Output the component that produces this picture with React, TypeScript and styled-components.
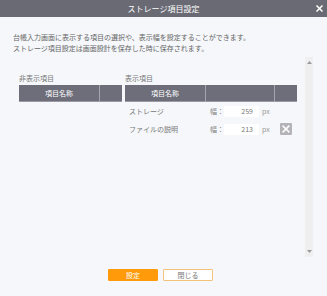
import React from 'react';
import styled, { createGlobalStyle } from 'styled-components';

const Global = createGlobalStyle`
  html, body { margin: 0; padding: 0; }
  body {
    width: 327px; height: 296px; overflow: hidden; background: #f5f7fa;
    font-family: "Noto Sans CJK JP", "Noto Sans", sans-serif;
  }
  * { box-sizing: border-box; }
`;

const Dialog = styled.div`
  width: 327px; height: 296px; display: flex; flex-direction: column; background: #f5f7fa;
`;

const TitleBar = styled.div`
  height: 17px; background: #6a6a74; color: #fff; font-size: 8px;
  display: grid; grid-template-columns: 1fr auto 1fr; align-items: center;
  padding: 0 4px 0 4px;
`;

const Title = styled.div`
  grid-column: 2; line-height: 17px; letter-spacing: 0;
`;

const CloseBtn = styled.button`
  grid-column: 3; justify-self: end; width: 7px; height: 7px; padding: 0; border: 0;
  background: transparent; display: flex; align-items: center; justify-content: center; cursor: pointer;
`;

const Description = styled.div`
  padding: 15px 0 0 13px; font-size: 7px; line-height: 11px; color: #666; height: 37px;
`;

const ScrollArea = styled.div`
  margin-top: 3px; height: 200px; display: flex; padding-left: 19px;
`;

const Panels = styled.div`
  display: flex; gap: 3px; padding-top: 16px;
`;

const Panel = styled.div<{ $w: number }>`
  width: ${p => p.$w}px; display: flex; flex-direction: column;
`;

const Label = styled.div`
  font-size: 7px; line-height: 10px; color: #777; margin-bottom: 2px;
`;

const Grid = styled.div<{ $cols: string }>`
  display: grid; grid-template-columns: ${p => p.$cols};
`;

const HeadCell = styled.div<{ $first?: boolean }>`
  height: 17px; background: #6e6e7b; color: #fff; font-size: 7px;
  display: flex; align-items: center; justify-content: center;
  border-left: ${p => (p.$first ? '0' : '1px solid #a4a4ad')};
  border-bottom: 1px solid #9a9aa4;
`;

const Row = styled.div<{ $cols: string }>`
  display: grid; grid-template-columns: ${p => p.$cols}; height: 18px; align-items: center;
`;

const NameCell = styled.div`
  font-size: 7px; color: #777; padding-left: 4px; line-height: 10px;
`;

const WidthCell = styled.div`
  display: flex; align-items: center; padding-left: 5px; font-size: 7px; color: #888;
`;

const WidthLabel = styled.span`
  width: 14px;
`;

const WidthInput = styled.input`
  width: 35px; height: 11px; border: 0; outline: none; background: #fff; padding: 0 6px 0 0;
  text-align: right; font-family: "Noto Sans CJK JP", "Noto Sans", sans-serif; font-size: 7px; color: #777;
`;

const Unit = styled.span`
  margin-left: 3px; color: #999;
`;

const ActionCell = styled.div`
  display: flex; justify-content: center;
`;

const DeleteBtn = styled.button`
  width: 12px; height: 12px; padding: 0; border: 0; border-radius: 1px; background: #b4b4b8;
  display: flex; align-items: center; justify-content: center; cursor: pointer;
`;

const Track = styled.div`
  margin-left: 8px; width: 8px; height: 200px; background: #efeff0;
  display: flex; flex-direction: column; justify-content: space-between; align-items: center;
  padding: 4px 0;
`;

const Footer = styled.div`
  padding-top: 12px; padding-right: 6px; display: flex; justify-content: center; gap: 5px;
`;

const Button = styled.button<{ $primary?: boolean }>`
  width: 50px; height: 12px; padding: 0; font-size: 7px; line-height: 10px;
  font-family: "Noto Sans CJK JP", "Noto Sans", sans-serif; border-radius: 1px; cursor: pointer;
  background: ${p => (p.$primary ? '#ff9a0a' : '#ffffff')};
  color: ${p => (p.$primary ? '#ffffff' : '#777777')};
  border: 1px solid ${p => (p.$primary ? '#ff9a0a' : '#f5c27c')};
`;

const LEFT_COLS = '80px 23px';
const RIGHT_COLS = '80px 69px 23px';

const rows = [
  { name: 'ストレージ', width: '259', deletable: false },
  { name: 'ファイルの説明', width: '213', deletable: true },
];

const XIcon = ({ size, stroke }: { size: number; stroke: number }) => (
  <svg width={size} height={size} viewBox="0 0 10 10">
    <path d="M1.5 1.5 L8.5 8.5 M8.5 1.5 L1.5 8.5" stroke="#fff" strokeWidth={stroke} strokeLinecap="square" />
  </svg>
);

const Arrow = ({ up }: { up?: boolean }) => (
  <svg width="5" height="3" viewBox="0 0 5 3">
    <path d={up ? 'M0 3 L2.5 0 L5 3 Z' : 'M0 0 L2.5 3 L5 0 Z'} fill="#9a9a9a" />
  </svg>
);

export default function App() {
  return (
    <>
      <Global />
      <Dialog>
        <TitleBar>
          <Title>ストレージ項目設定</Title>
          <CloseBtn aria-label="close"><XIcon size={7} stroke={2.2} /></CloseBtn>
        </TitleBar>
        <Description>
          台帳入力画面に表示する項目の選択や、表示幅を設定することができます。
          <br />
          ストレージ項目設定は画面設計を保存した時に保存されます。
        </Description>
        <ScrollArea>
          <Panels>
            <Panel $w={103}>
              <Label>非表示項目</Label>
              <Grid $cols={LEFT_COLS}>
                <HeadCell $first>項目名称</HeadCell>
                <HeadCell />
              </Grid>
            </Panel>
            <Panel $w={172}>
              <Label>表示項目</Label>
              <Grid $cols={RIGHT_COLS}>
                <HeadCell $first>項目名称</HeadCell>
                <HeadCell />
                <HeadCell />
              </Grid>
              {rows.map(r => (
                <Row key={r.name} $cols={RIGHT_COLS}>
                  <NameCell>{r.name}</NameCell>
                  <WidthCell>
                    <WidthLabel>幅：</WidthLabel>
                    <WidthInput readOnly defaultValue={r.width} />
                    <Unit>px</Unit>
                  </WidthCell>
                  <ActionCell>
                    {r.deletable && (
                      <DeleteBtn aria-label="delete"><XIcon size={8} stroke={2} /></DeleteBtn>
                    )}
                  </ActionCell>
                </Row>
              ))}
            </Panel>
          </Panels>
          <Track>
            <Arrow up />
            <Arrow />
          </Track>
        </ScrollArea>
        <Footer>
          <Button $primary>設定</Button>
          <Button>閉じる</Button>
        </Footer>
      </Dialog>
    </>
  );
}
